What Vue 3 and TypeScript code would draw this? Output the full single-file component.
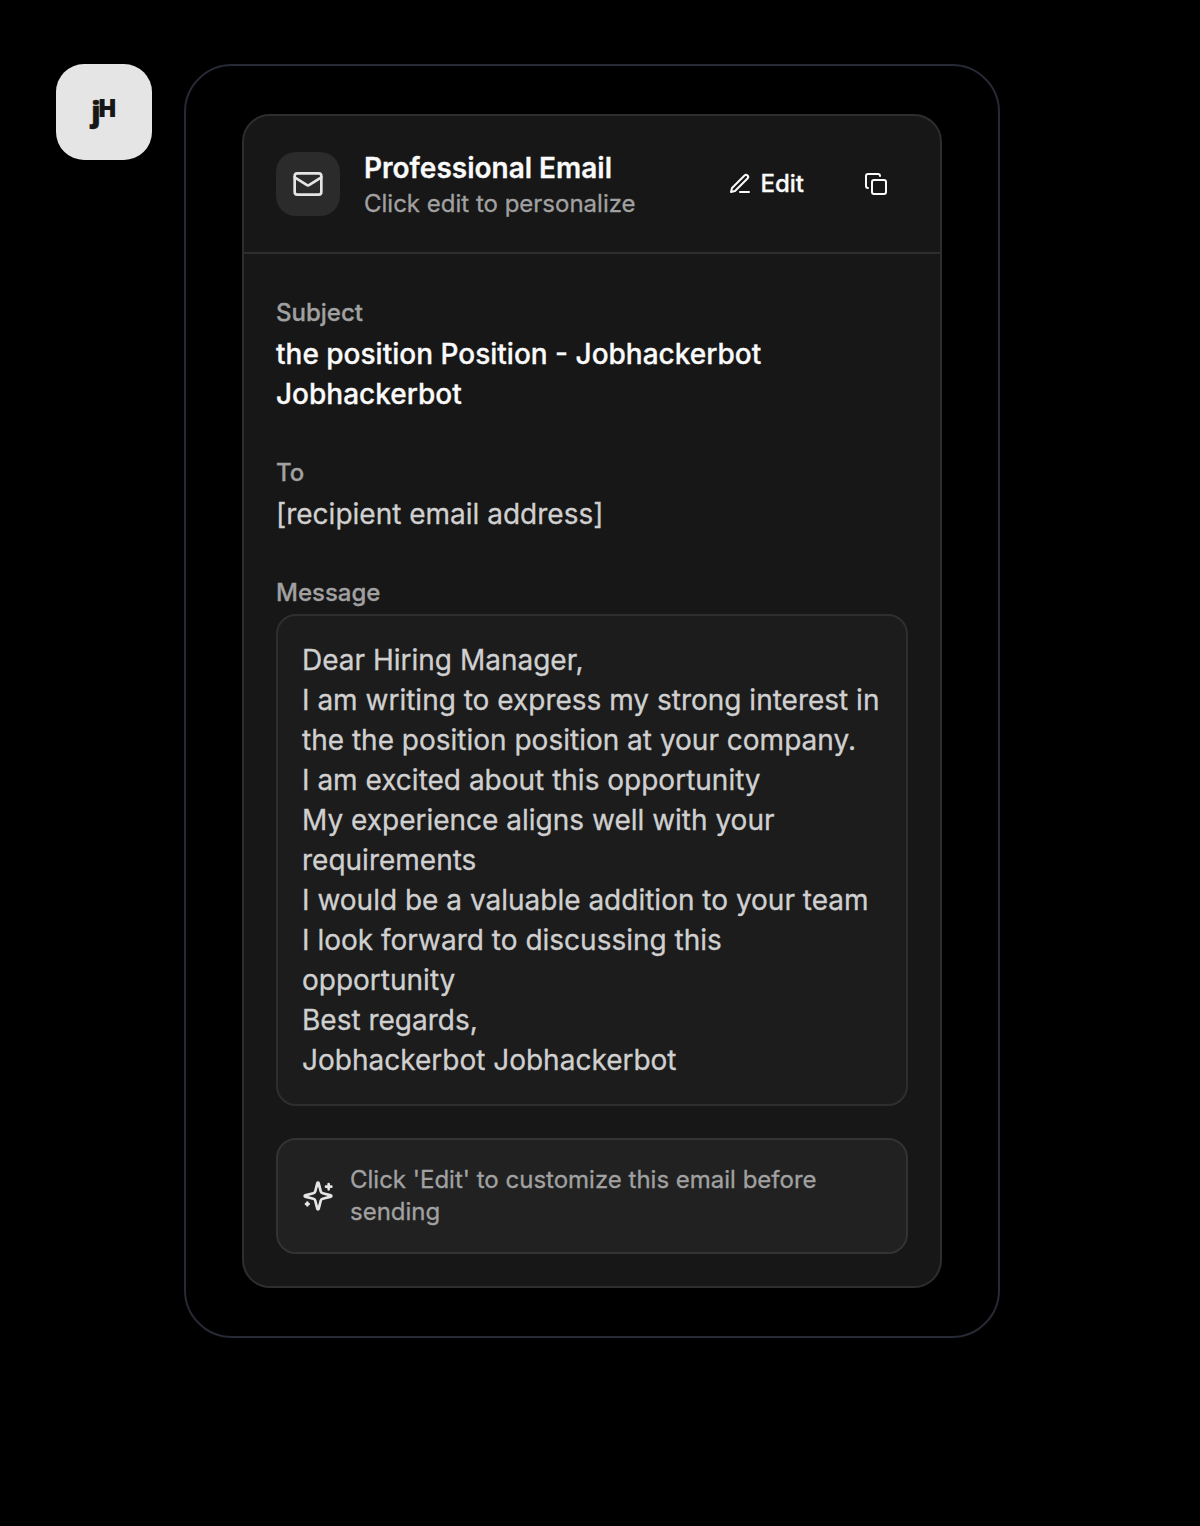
<script setup lang="ts">
const paragraphs: string[] = [
  'Dear Hiring Manager,',
  'I am writing to express my strong interest in the the position position at your company.',
  'I am excited about this opportunity',
  'My experience aligns well with your requirements',
  'I would be a valuable addition to your team',
  'I look forward to discussing this opportunity',
  'Best regards,',
  'Jobhackerbot Jobhackerbot',
]
</script>

<template>
  <main class="page">
    <div class="avatar"><span class="j">j</span><span class="h">H</span></div>
    <section class="bubble">
      <article class="card">
        <header class="head">
          <div class="badge">
            <svg class="icon large" viewBox="0 0 24 24">
              <rect width="20" height="16" x="2" y="4" rx="2" />
              <path d="m22 7-8.97 5.7a1.94 1.94 0 0 1-2.06 0L2 7" />
            </svg>
          </div>
          <div class="titles">
            <h1>Professional Email</h1>
            <p>Click edit to personalize</p>
          </div>
          <button class="btn edit" type="button">
            <svg class="icon small" viewBox="0 0 24 24">
              <path d="M12 20h9" />
              <path d="M16.5 3.5a2.12 2.12 0 0 1 3 3L7 19l-4 1 1-4Z" />
            </svg>
            Edit
          </button>
          <button class="btn copy" type="button" aria-label="Copy">
            <svg class="icon small" viewBox="0 0 24 24">
              <rect width="14" height="14" x="8" y="8" rx="2" />
              <path d="M4 16c-1.1 0-2-.9-2-2V4c0-1.1.9-2 2-2h10c1.1 0 2 .9 2 2" />
            </svg>
          </button>
        </header>
        <div class="body">
          <div>
            <div class="label">Subject</div>
            <p class="value strong">the position Position - Jobhackerbot Jobhackerbot</p>
          </div>
          <div>
            <div class="label">To</div>
            <p class="value">[recipient email address]</p>
          </div>
          <div>
            <div class="label">Message</div>
            <div class="message">
              <p v-for="line in paragraphs" :key="line">{{ line }}</p>
            </div>
          </div>
          <div class="hint">
            <svg class="icon large" viewBox="0 0 24 24">
              <path d="M9.937 15.5A2 2 0 0 0 8.5 14.063l-6.135-1.582a.5.5 0 0 1 0-.962L8.5 9.936A2 2 0 0 0 9.937 8.5l1.582-6.135a.5.5 0 0 1 .963 0L14.063 8.5A2 2 0 0 0 15.5 9.937l6.135 1.581a.5.5 0 0 1 0 .964L15.5 14.063a2 2 0 0 0-1.437 1.437l-1.582 6.135a.5.5 0 0 1-.963 0z" />
              <path d="M20 3v4M22 5h-4M4 17v2M5 18H3" />
            </svg>
            <p>Click 'Edit' to customize this email before sending</p>
          </div>
        </div>
      </article>
    </section>
  </main>
</template>

<style>
body {
  background: #000;
}
</style>

<style scoped>
.page {
  display: flex;
  align-items: flex-start;
  gap: 32px;
  box-sizing: border-box;
  width: 1200px;
  height: 1526px;
  padding: 64px 56px;
  background: #000;
  color: #fafafa;
  font-family: Inter, sans-serif;
  -webkit-text-stroke: 0.3px currentColor;
}
h1,
p {
  margin: 0;
}
.avatar {
  display: flex;
  flex: none;
  align-items: center;
  justify-content: center;
  width: 96px;
  height: 96px;
  border-radius: 28px;
  background: #e5e5e5;
  color: #171717;
  font: 800 25px/34px 'Open Sans', sans-serif;
  -webkit-text-stroke: 0;
}
.j {
  margin-right: -3px;
  margin-bottom: 3px;
  font-size: 29px;
  -webkit-text-stroke: 0.4px currentColor;
}
.h {
  margin-bottom: 11px;
}
.bubble {
  box-sizing: border-box;
  width: 816px;
  padding: 48px 56px;
  border: 2px solid #272a34;
  border-radius: 48px;
}
.card {
  border: 2px solid #2e2e2e;
  border-radius: 28px;
  background: #171717;
  overflow: hidden;
}
.head {
  display: flex;
  align-items: center;
  padding: 32px;
  border-bottom: 2px solid #2e2e2e;
}
.badge {
  display: flex;
  align-items: center;
  justify-content: center;
  width: 64px;
  height: 64px;
  margin-right: 24px;
  border-radius: 20px;
  background: #2b2b2b;
}
.icon {
  flex: none;
  fill: none;
  stroke: currentColor;
  stroke-width: 2;
  stroke-linecap: round;
  stroke-linejoin: round;
}
.large {
  width: 32px;
  height: 32px;
  color: #e5e5e5;
}
.small {
  width: 24px;
  height: 24px;
}
.titles {
  flex: 1;
}
h1 {
  font-size: 28px;
  font-weight: 600;
  line-height: 40px;
}
.titles p {
  color: #a1a1a1;
  font-size: 24px;
  line-height: 32px;
}
.btn {
  display: flex;
  align-items: center;
  justify-content: center;
  height: 64px;
  padding: 0;
  border: 0;
  background: none;
  color: inherit;
  font: 500 24px/32px Inter, sans-serif;
}
.edit {
  gap: 8px;
  margin-right: 16px;
  padding: 0 24px;
}
.copy {
  width: 64px;
}
.body {
  display: flex;
  flex-direction: column;
  gap: 32px;
  padding: 32px;
}
.label {
  padding: 11px 0 5px;
  color: #a1a1a1;
  font-size: 24px;
  font-weight: 500;
  line-height: 32px;
}
.value,
.message {
  color: #d0d0d0;
  font-size: 28px;
  line-height: 40px;
}
.strong {
  color: #fafafa;
  font-weight: 500;
}
.message {
  padding: 24px;
  border: 2px solid #2e2e2e;
  border-radius: 20px;
  background: #1c1c1c;
}
.hint {
  display: flex;
  align-items: center;
  gap: 16px;
  padding: 24px;
  border: 2px solid #333;
  border-radius: 20px;
  background: #212121;
  color: #a1a1a1;
  font-size: 24px;
  line-height: 32px;
}
</style>
